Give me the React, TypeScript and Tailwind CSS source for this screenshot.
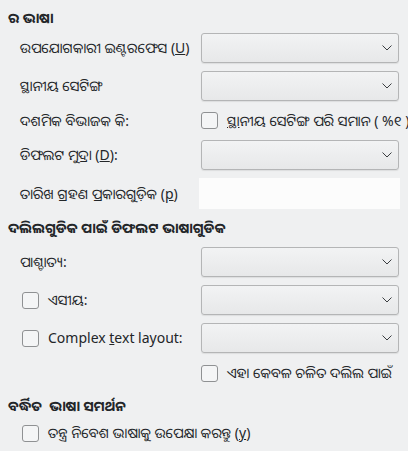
import React from "react";

const font = { fontFamily: '"Noto Sans", "Noto Sans Oriya", "Lohit Odia", sans-serif' };

function Combo() {
  return (
    <div className="flex h-[30px] w-[198px] items-center justify-end rounded-[3px] border border-[#b4b5b6] bg-gradient-to-b from-[#f2f3f4] to-[#e7e8e9] pr-[6px] shadow-[0_1px_1px_rgba(0,0,0,0.08)]">
      <svg width="10" height="6" viewBox="0 0 10 6" fill="none">
        <path d="M0.5 0.5 L5 5 L9.5 0.5" stroke="#3b3e41" strokeWidth="1" />
      </svg>
    </div>
  );
}

function Check() {
  return (
    <span className="inline-block h-[17px] w-[17px] shrink-0 rounded-[3px] border border-[#8f9193] bg-[#f4f5f6]" />
  );
}

function Row({ label, children, h = "h-[30px]" }: { label: React.ReactNode; children: React.ReactNode; h?: string }) {
  return (
    <div className={`flex ${h} items-center`}>
      <div className="w-[193px] shrink-0 whitespace-nowrap pl-[12px]">{label}</div>
      {children}
    </div>
  );
}

export default function App() {
  return (
    <div
      style={font}
      className="h-[451px] w-[408px] overflow-hidden bg-[#eff0f1] px-[8px] text-[14px] leading-[20px] text-[#232629]"
    >
      <div className="mt-[8px] h-[20px] font-bold">ର ଭାଷା</div>

      <div className="mt-[5px] flex flex-col gap-[8px]">
        <Row label={<span>ଉପଯୋଗକାରୀ ଇଣ୍ଟରଫେସ (<u>U</u>)</span>}>
          <Combo />
        </Row>
        <Row label="ସ୍ଥାନୀୟ ସେଟିଙ୍ଗ">
          <Combo />
        </Row>
        <Row label="ଦଶମିକ ବିଭାଜକ କି:" h="h-[23px]">
          <div className="flex items-center gap-[9px] whitespace-nowrap">
            <Check />
            <span><u>ସ୍ଥା</u>ନୀୟ ସେଟିଙ୍ଗ ପରି ସମାନ ( %୧ )</span>
          </div>
        </Row>
        <Row label={<span>ଡିଫଲଟ ମୁଦ୍ରା (<u>D</u>):</span>}>
          <Combo />
        </Row>
        <Row label={<span>ତାରିଖ ଗ୍ରହଣ ପ୍ରକାରଗୁଡ଼ିକ (<u>p</u>)</span>} h="h-[31px]">
          <div className="-ml-[2px] h-[31px] w-[201px] bg-[#fcfcfc]" />
        </Row>
      </div>

      <div className="mt-[9px] h-[20px] font-bold">ଦଲିଲଗୁଡିକ ପାଇଁ ଡିଫଲଟ ଭାଷାଗୁଡିକ</div>

      <div className="mt-[9px] flex flex-col gap-[8px]">
        <Row label="ପାଶ୍ଚାତ୍ୟ:">
          <Combo />
        </Row>
        <Row
          label={
            <div className="flex items-center gap-[9px] pl-[2px]">
              <Check />
              <span>ଏସୀୟ:</span>
            </div>
          }
        >
          <Combo />
        </Row>
        <Row
          label={
            <div className="flex items-center gap-[9px] pl-[2px]">
              <Check />
              <span>Complex <u>t</u>ext layout:</span>
            </div>
          }
        >
          <Combo />
        </Row>
        <Row label="" h="h-[24px]">
          <div className="flex items-center gap-[9px] whitespace-nowrap">
            <Check />
            <span>ଏହା କେବଳ ଚଳିତ ଦଲିଲ ପାଇଁ</span>
          </div>
        </Row>
      </div>

      <div className="mt-[11px] h-[20px] whitespace-pre font-bold">ବର୍ଦ୍ଧିତ  ଭାଷା ସମର୍ଥନ</div>

      <div className="mt-[6px] flex h-[22px] items-center gap-[9px] pl-[14px]">
        <Check />
        <span>ତନ୍ତ୍ର ନିବେଶ ଭାଷାକୁ ଉପେକ୍ଷା କରନ୍ତୁ (<u>y</u>)</span>
      </div>
    </div>
  );
}
